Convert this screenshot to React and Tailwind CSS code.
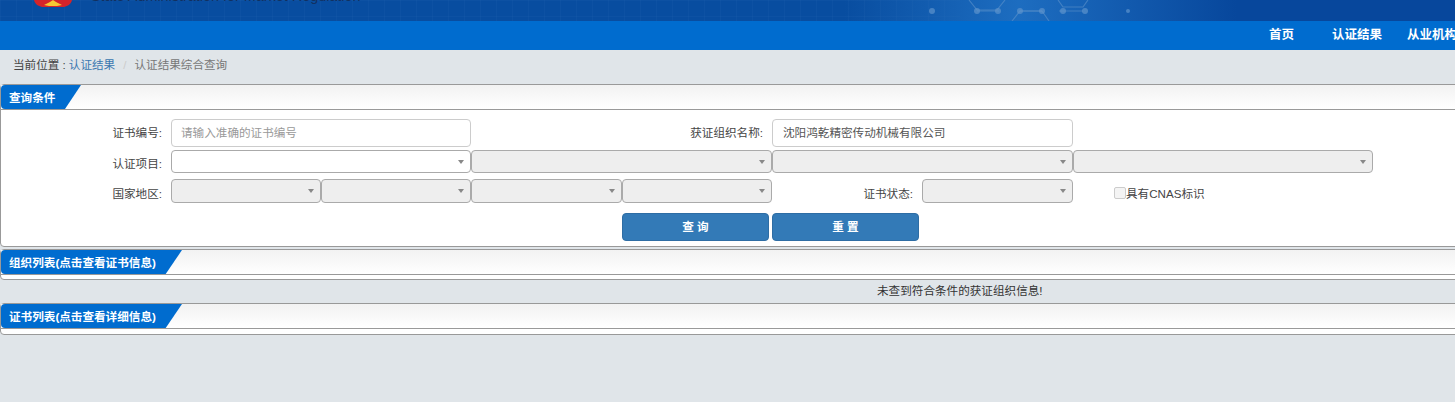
import React from "react";

function Caret() {
  return <span className="w-0 h-0 border-x-[3px] border-x-transparent border-t-[4px] border-t-[#888]" />;
}

function Sel({ w, h = "h-[23px]", on = false }) {
  return (
    <div className={`${w} ${h} shrink-0 flex items-center justify-end pr-[6px] rounded-[4px] border border-[#aaa] ${on ? "bg-white" : "bg-[#eee]"}`}>
      <Caret />
    </div>
  );
}

function Label({ w, down, children }) {
  return <span className={`${w} ${down} text-right mr-[9px] whitespace-nowrap text-[#444]`}>{children}</span>;
}

function PanelHead({ title, tab }) {
  return (
    <div className="h-[25px] border-b border-[#999] bg-gradient-to-b from-[#f2f2f2] to-white">
      <div className={`${tab} pt-[1px] h-full bg-[#006ccf] text-white text-[11.6px] font-bold leading-[24px] pl-[8px] rounded-l-[4px] whitespace-nowrap`}>
        {title}
      </div>
    </div>
  );
}

export default function App() {
  return (
    <div className="w-[1455px] h-[402px] overflow-hidden bg-[#e0e5e9] text-[11.6px] text-[#333] font-['Liberation_Sans','Noto_Sans_CJK_SC',sans-serif]">
      <div className="relative h-[21px] overflow-hidden bg-[linear-gradient(to_right,#084da0_0%,#084da0_58%,#1d6dc0_70%,#07479c_85%,#07479c_100%)]">
        <svg className="absolute inset-0" width="1455" height="21">
          <defs>
            <pattern id="g" width="16" height="16" patternUnits="userSpaceOnUse">
              <path d="M16 0H0V16" fill="none" stroke="#2b6bb5" strokeOpacity="0.25" />
            </pattern>
          </defs>
          <rect width="960" height="21" fill="url(#g)" />
          <path d="M34 0h38c-1 4-4 6-8 7H42c-4-1-7-3-8-7z" fill="#d4242a" />
          <path d="M44 5l6-3 3-2 3 2 6 3-5 1H49z" fill="#f5c832" />
          <g fill="none" stroke="#5d93cc" strokeWidth="1.2" strokeOpacity="0.6">
            <path d="M969 0l8 10h20l8-10" />
            <path d="M977 11h22M1020 11h22M1059 11h24" />
            <path d="M1012 21l8-10h22l7 10" />
            <path d="M1058 0l5 7h20l5-7" />
          </g>
          <g fill="#5d93cc" fillOpacity="0.7">
            <circle cx="932" cy="11" r="3" /><circle cx="977" cy="11" r="3" /><circle cx="998" cy="11" r="3" />
            <circle cx="1020" cy="11" r="3" /><circle cx="1042" cy="11" r="3" /><circle cx="1063" cy="11" r="3" />
            <circle cx="1085" cy="11" r="3" /><circle cx="1128" cy="11" r="2" />
          </g>
        </svg>
        <div className="absolute left-[91px] top-[-13px] text-[#12305f] text-[14.4px] leading-[18px] whitespace-nowrap">
          State Administration for Market Regulation
        </div>
      </div>

      <div className="h-[29px] bg-[#006ccf] flex justify-end items-center text-white font-bold text-[12.5px] overflow-hidden">
        <div className="flex translate-x-[2px] gap-[25px]">
          <span className="mr-[13px]">首页</span>
          <span>认证结果</span>
          <span>从业机构</span>
        </div>
      </div>

      <div className="h-[34px] flex items-center pl-[13px] pb-[4px] whitespace-nowrap">
        <span className="text-[#444]">当前位置 : </span>
        <span className="text-[#3a78b0] ml-[3px]">认证结果</span>
        <span className="text-[#ccc] mx-[8px]">/</span>
        <span className="text-[#777]">认证结果综合查询</span>
      </div>

      <div className="w-[1480px] h-[163px] bg-white border border-[#999] rounded-[4px]">
        <PanelHead title="查询条件" tab="w-[80px] [clip-path:polygon(0_0,100%_0,80%_100%,0_100%)]" />
        <div className="pt-[8px]">
          <div className="flex items-center h-[29px]">
            <Label w="w-[161px]" down="">证书编号:</Label>
            <div className="w-[300px] h-[28px] shrink-0 border border-[#ccc] rounded-[4px] pl-[9px] leading-[26px] text-[#999]">请输入准确的证书编号</div>
            <Label w="w-[292px]" down="">获证组织名称:</Label>
            <div className="w-[301px] h-[28px] shrink-0 border border-[#ccc] rounded-[4px] pl-[10px] leading-[26px] text-[#555]">沈阳鸿乾精密传动机械有限公司</div>
          </div>
          <div className="flex items-center mt-[3px] h-[23px]">
            <Label w="w-[161px]" down="pt-[5px]">认证项目:</Label>
            <Sel w="w-[300px]" on />
            <Sel w="w-[301px]" />
            <Sel w="w-[301px]" />
            <Sel w="w-[300px]" />
          </div>
          <div className="flex items-center mt-[6px] h-[24px]">
            <Label w="w-[161px]" down="pt-[5px]">国家地区:</Label>
            <Sel w="w-[150px]" h="h-[24px]" />
            <Sel w="w-[150px]" h="h-[24px]" />
            <Sel w="w-[151px]" h="h-[24px]" />
            <Sel w="w-[150px]" h="h-[24px]" />
            <Label w="w-[141px]" down="pt-[5px]">证书状态:</Label>
            <Sel w="w-[151px]" h="h-[24px]" />
            <span className="ml-[41px] w-[12px] h-[12px] shrink-0 border border-[#ccc] rounded-[2px] bg-[#f4f4f4] mt-[3px]" />
            <span className="whitespace-nowrap pt-[5px] text-[#444]">具有CNAS标识</span>
          </div>
          <div className="flex mt-[10px] ml-[621px] gap-[3px]">
            <div className="w-[147px] h-[28px] bg-[#337ab7] border border-[#2e6da4] rounded-[4px] text-white font-bold text-center leading-[26px]">查 询</div>
            <div className="w-[147px] h-[28px] bg-[#337ab7] border border-[#2e6da4] rounded-[4px] text-white font-bold text-center leading-[26px]">重 置</div>
          </div>
        </div>
      </div>

      <div className="w-[1480px] h-[31px] mt-[2px] bg-white border border-[#999] rounded-[4px]">
        <PanelHead title="组织列表(点击查看证书信息)" tab="w-[181px] [clip-path:polygon(0_0,100%_0,91%_100%,0_100%)]" />
      </div>

      <div className="h-[23px] pl-[877px] leading-[21px] text-[#333] whitespace-nowrap">未查到符合条件的获证组织信息!</div>

      <div className="w-[1480px] h-[32px] bg-white border border-[#999] rounded-[4px]">
        <PanelHead title="证书列表(点击查看详细信息)" tab="w-[181px] [clip-path:polygon(0_0,100%_0,91%_100%,0_100%)]" />
      </div>
    </div>
  );
}
